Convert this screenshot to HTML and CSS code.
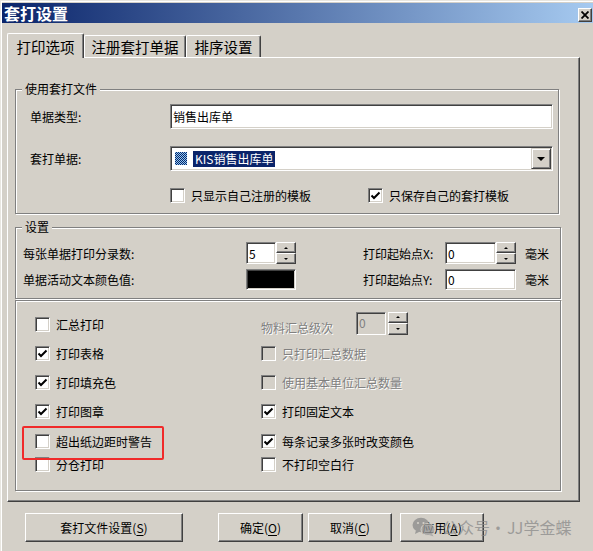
FILE: index.html
```html
<!DOCTYPE html>
<html>
  <head>
    <meta charset="utf-8">
    <title>套打设置</title>
    <link rel="stylesheet" href="styles.css">
  </head>
  <body>
    <div class="window">
      <div class="titlebar">
        <span>套打设置</span>
        <span class="close">
          <svg width="8" height="8" viewBox="0 0 8 8"><path d="M0.5 0.5 L7.5 7.5 M7.5 0.5 L0.5 7.5" stroke="#000" stroke-width="1.8"/></svg>
        </span>
      </div>

      <div class="tabs">
        <div class="tab sel t1">打印选项</div>
        <div class="tab t2">注册套打单据</div>
        <div class="tab t3">排序设置</div>
      </div>

      <div class="panel">
        <!-- 使用套打文件 -->
        <div class="group g1">
          <span class="legend">使用套打文件</span>
          <div class="row r1">
            <span class="lbl">单据类型:</span>
            <div class="field wide">销售出库单</div>
          </div>
          <div class="row r2">
            <span class="lbl">套打单据:</span>
            <div class="field wide combo">
              <span class="pat"></span>
              <span class="hl">KIS销售出库单</span>
              <span class="drop"><i></i></span>
            </div>
          </div>
          <div class="row r3">
            <label class="chk c1"><span class="box"></span>只显示自己注册的模板</label>
            <label class="chk"><span class="box"><svg width="11" height="11" viewBox="0 0 11 11"><path d="M1.5 5.5 L4 8 L9.5 2.5" fill="none" stroke="#000" stroke-width="2"/></svg></span>只保存自己的套打模板</label>
          </div>
        </div>

        <!-- 设置 -->
        <div class="group g2">
          <span class="legend">设置</span>
          <div class="row ra">
            <span class="lbl2">每张单据打印分录数:</span>
            <div class="spin s1">
              <div class="field num">5</div>
              <div class="updown"><span class="up"><i></i></span><span class="dn"><i></i></span></div>
            </div>
            <span class="lbl3">打印起始点X:</span>
            <div class="spin s2">
              <div class="field num">0</div>
              <div class="updown"><span class="up"><i></i></span><span class="dn"><i></i></span></div>
            </div>
            <span class="unit">毫米</span>
          </div>
          <div class="row rb">
            <span class="lbl2">单据活动文本颜色值:</span>
            <div class="field color"></div>
            <span class="lbl3">打印起始点Y:</span>
            <div class="field posy">0</div>
            <span class="unit">毫米</span>
          </div>
        </div>

        <!-- options -->
        <div class="group g3">
          <label class="chk"><span class="box"></span>汇总打印</label>
          <div class="level">
            <span class="dis">物料汇总级次</span>
            <div class="spin s3">
              <div class="field num dim">0</div>
              <div class="updown"><span class="up"><i></i></span><span class="dn"><i></i></span></div>
            </div>
          </div>

          <label class="chk"><span class="box"><svg width="11" height="11" viewBox="0 0 11 11"><path d="M1.5 5.5 L4 8 L9.5 2.5" fill="none" stroke="#000" stroke-width="2"/></svg></span>打印表格</label>
          <label class="chk off"><span class="box"></span><span class="dis">只打印汇总数据</span></label>

          <label class="chk"><span class="box"><svg width="11" height="11" viewBox="0 0 11 11"><path d="M1.5 5.5 L4 8 L9.5 2.5" fill="none" stroke="#000" stroke-width="2"/></svg></span>打印填充色</label>
          <label class="chk off"><span class="box"></span><span class="dis">使用基本单位汇总数量</span></label>

          <label class="chk"><span class="box"><svg width="11" height="11" viewBox="0 0 11 11"><path d="M1.5 5.5 L4 8 L9.5 2.5" fill="none" stroke="#000" stroke-width="2"/></svg></span>打印图章</label>
          <label class="chk"><span class="box"><svg width="11" height="11" viewBox="0 0 11 11"><path d="M1.5 5.5 L4 8 L9.5 2.5" fill="none" stroke="#000" stroke-width="2"/></svg></span>打印固定文本</label>

          <label class="chk"><span class="box"></span>超出纸边距时警告</label>
          <label class="chk"><span class="box"><svg width="11" height="11" viewBox="0 0 11 11"><path d="M1.5 5.5 L4 8 L9.5 2.5" fill="none" stroke="#000" stroke-width="2"/></svg></span>每条记录多张时改变颜色</label>

          <label class="chk"><span class="box"></span>分仓打印</label>
          <label class="chk"><span class="box"></span>不打印空白行</label>
        </div>
      </div>

      <div class="buttons">
        <div class="btn b1">套打文件设置(<u>S</u>)</div>
        <div class="btn b2">确定(<u>O</u>)</div>
        <div class="btn b3">取消(<u>C</u>)</div>
        <div class="btn b4">应用(<u>A</u>)</div>
      </div>

      <div class="mark"></div>

      <div class="wm">
        <svg width="24" height="20" viewBox="0 0 24 20">
          <ellipse cx="9" cy="8" rx="8.5" ry="7.2" fill="#8a8a8a"/>
          <path d="M4 13 L3 17 L8 14.5 Z" fill="#8a8a8a"/>
          <ellipse cx="16" cy="12.5" rx="7" ry="6" fill="#9a9a9a" stroke="#d4d0c8" stroke-width="1"/>
          <path d="M20 17 L21.5 19.5 L17.5 18 Z" fill="#9a9a9a"/>
          <circle cx="6" cy="6" r="1.1" fill="#d4d0c8"/>
          <circle cx="11.5" cy="6" r="1.1" fill="#d4d0c8"/>
        </svg>
        <span class="wm-text">公众号</span><span class="dot">·</span><span class="wm-text">JJ学金蝶</span>
      </div>
    </div>
  </body>
</html>
```

FILE: styles.css
```css
* { margin: 0; padding: 0; box-sizing: border-box; }
body {
  font-family: "Noto Sans CJK SC", sans-serif;
  font-size: 12px;
  color: #000;
  background: #d4d0c8;
  overflow: hidden;
}

.window {
  position: relative;
  width: 593px;
  height: 551px;
  padding: 3px 0 0 2px;
  background: #d4d0c8;
  box-shadow: inset 1px 1px 0 #e8e6e0, inset 2px 2px 0 #fff;
}

/* title bar */
.titlebar {
  display: flex;
  justify-content: space-between;
  height: 20px;
  padding: 0 1px 0 2px;
  background: linear-gradient(to right, #0a246a, #a6caf0);
  color: #fff;
  font-size: 16px;
  font-weight: bold;
  line-height: 20px;
}
.close {
  align-self: flex-end;
  display: flex;
  align-items: center;
  justify-content: center;
  width: 14px;
  height: 14px;
  margin-bottom: 1px;
  background: #d4d0c8;
  border: 1px solid;
  border-color: #fff #404040 #404040 #fff;
  box-shadow: inset -1px -1px 0 #808080;
}

/* tabs */
.tabs {
  display: flex;
  align-items: flex-end;
  height: 24px;
  margin-top: 10px;
  padding-left: 5px;
  font-size: 14.5px;
  line-height: 16px;
}
.tab {
  display: flex;
  justify-content: center;
  height: 22px;
  padding-top: 3px;
  background: #d4d0c8;
  border-top: 1px solid #fff;
  border-left: 1px solid #fff;
  border-right: 1px solid #404040;
  border-radius: 2px 2px 0 0;
  box-shadow: inset -1px 0 0 #808080;
}
.tab.sel {
  position: relative;
  z-index: 1;
  height: 25px;
  margin-bottom: -1px;
  padding-top: 5px;
}
.t1 { width: 77px; }
.t2 { width: 102px; }
.t3 { width: 75px; }

/* tab page */
.panel {
  width: 573px;
  height: 445px;
  margin-left: 5px;
  padding: 31px 0 0 7px;
  border: 1px solid;
  border-color: #fff #404040 #404040 #fff;
  box-shadow: inset -1px -1px 0 #808080;
}

.group {
  position: relative;
  border: 1px solid #808080;
  box-shadow: 1px 1px 0 #fff, inset 1px 1px 0 #fff;
}
.legend {
  position: absolute;
  top: -8px;
  left: 6px;
  padding: 0 3px;
  background: #d4d0c8;
  line-height: 14px;
}

.row {
  display: flex;
  align-items: center;
}

.g1 {
  width: 544px;
  height: 125px;
  padding-left: 14px;
}
.r1 { margin-top: 14px; height: 25px; }
.r2 { margin-top: 17px; height: 25px; }
.r3 { margin-top: 17px; height: 15px; padding-left: 140px; }
.lbl { width: 140px; }
.wide { width: 383px; height: 25px; }
.c1 { width: 198px; }

.g2 {
  width: 546px;
  height: 72px;
  margin-top: 13px;
  padding-left: 7px;
}
.ra { margin-top: 14px; height: 22px; }
.rb { margin-top: 5px; height: 21px; }
.lbl2 { width: 223px; }
.lbl3 { width: 82px; margin-left: 67px; }
.unit { margin-left: 9px; }

.g3 {
  display: grid;
  grid-template-columns: 226px 1fr;
  grid-template-rows: 29px 29px 29px 29px 30px 17px;
  align-items: center;
  width: 546px;
  height: 191px;
  margin-top: 1px;
  padding: 9px 0 0 19px;
}

/* sunken fields */
.field {
  display: flex;
  align-items: center;
  padding-left: 2px;
  background: #fff;
  border: 1px solid;
  border-color: #808080 #fff #fff #808080;
  box-shadow: inset 1px 1px 0 #404040, inset -1px -1px 0 #d4d0c8;
  white-space: nowrap;
}
.combo { padding-left: 4px; }
.pat {
  width: 12px;
  height: 13px;
  background: repeating-conic-gradient(#0a246a 0 25%, #8ec8f0 0 50%) 0 0 / 2px 2px;
}
.hl {
  margin-left: 6px;
  padding: 0 2px;
  background: #0a246a;
  color: #fff;
  line-height: 16px;
}
.drop {
  display: flex;
  align-items: center;
  justify-content: center;
  align-self: stretch;
  width: 20px;
  margin: 1px 1px 1px auto;
  background: #d4d0c8;
  border: 1px solid;
  border-color: #d4d0c8 #404040 #404040 #d4d0c8;
  box-shadow: inset 1px 1px 0 #fff, inset -1px -1px 0 #808080;
}
.drop i {
  border-left: 4px solid transparent;
  border-right: 4px solid transparent;
  border-top: 4px solid #000;
}

.spin { display: flex; }
.s1 { height: 22px; }
.s1 .num { width: 30px; }
.s2 { height: 22px; }
.s2 .num { width: 51px; }
.s3 { height: 23px; margin-left: 23px; }
.s3 .num { width: 30px; }
.s3 .updown { margin-left: 2px; }
.num { height: 100%; }
.dim { background: #d4d0c8; color: #808080; }
.updown {
  display: flex;
  flex-direction: column;
  width: 20px;
}
.updown span {
  flex: 1;
  display: flex;
  align-items: center;
  justify-content: center;
  background: #d4d0c8;
  border: 1px solid;
  border-color: #fff #404040 #404040 #fff;
  box-shadow: inset -1px -1px 0 #808080;
}
.up i {
  border-left: 2px solid transparent;
  border-right: 2px solid transparent;
  border-bottom: 2px solid #000;
}
.dn i {
  border-left: 2px solid transparent;
  border-right: 2px solid transparent;
  border-top: 2px solid #000;
}
.color { width: 50px; height: 21px; background: #000; }
.posy { width: 71px; height: 21px; }

.level {
  display: flex;
  align-items: flex-end;
  margin-bottom: 3px;
  line-height: 14px;
}

/* check boxes */
.chk {
  display: flex;
  align-items: center;
  gap: 6px;
  white-space: nowrap;
}
.box {
  display: flex;
  align-items: center;
  justify-content: center;
  width: 15px;
  height: 15px;
  background: #fff;
  border: 1px solid;
  border-color: #808080 #fff #fff #808080;
  box-shadow: inset 1px 1px 0 #404040, inset -1px -1px 0 #d4d0c8;
}
.off .box { background: #d4d0c8; }
.dis {
  color: #808080;
  text-shadow: 1px 1px 0 #fff;
}

/* buttons */
.buttons {
  display: flex;
  margin-top: 11px;
  padding-left: 23px;
}
.btn {
  display: flex;
  align-items: center;
  justify-content: center;
  height: 29px;
  background: #d4d0c8;
  border: 1px solid;
  border-color: #fff #404040 #404040 #fff;
  box-shadow: inset -1px -1px 0 #808080;
}
.btn u { text-decoration-thickness: 1px; text-underline-offset: 2px; }
.b1 { width: 158px; }
.b2 { width: 85px; margin-left: 35px; }
.b3 { width: 84px; margin-left: 5px; }
.b4 { width: 84px; margin-left: 8px; }

/* red annotation and watermark */
.mark {
  position: absolute;
  left: 22px;
  top: 426px;
  width: 142px;
  height: 34px;
  border: 2px solid #f02a2a;
  border-radius: 2px;
}
.wm {
  position: absolute;
  left: 412px;
  top: 517px;
  display: flex;
  align-items: center;
  opacity: 0.75;
  font-size: 16px;
  line-height: 20px;
  color: #8a8a8a;
}
.wm svg { margin-right: 6px; }
.dot { margin: 0 1px 0 0; }
```
